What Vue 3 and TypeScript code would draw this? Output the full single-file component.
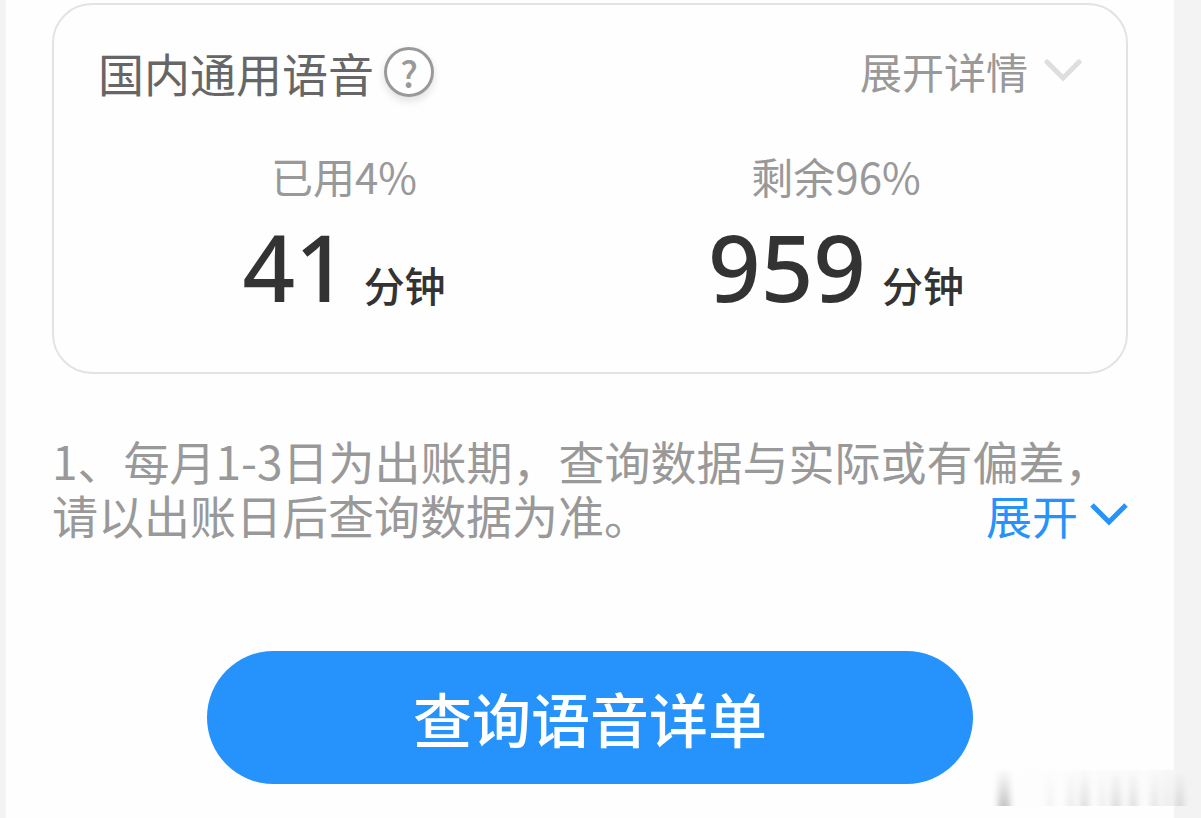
<script setup lang="ts">
interface Usage {
  label: string
  value: number
}

interface Smudge {
  x: number
  width: number
  strength: number
}

const usages: Usage[] = [
  { label: '已用4%', value: 41 },
  { label: '剩余96%', value: 959 },
]

const smudges: Smudge[] = [
  { x: 8, width: 12, strength: 0.5 },
  { x: 57, width: 6, strength: 0.1 },
  { x: 77, width: 8, strength: 0.14 },
  { x: 90, width: 9, strength: 0.26 },
  { x: 109, width: 6, strength: 0.14 },
  { x: 121, width: 10, strength: 0.26 },
  { x: 139, width: 8, strength: 0.26 },
  { x: 161, width: 7, strength: 0.2 },
  { x: 174, width: 5, strength: 0.14 },
  { x: 185, width: 9, strength: 0.28 },
]
</script>

<template>
  <div class="page">
    <main class="sheet">
      <section class="card">
        <header class="card-head">
          <h1 class="title">国内通用语音</h1>
          <button class="help" type="button" aria-label="说明">?</button>
          <button class="details" type="button">
            <span>展开详情</span>
            <svg class="chevron" viewBox="0 0 38 24" fill="none" aria-hidden="true">
              <path d="M3 3 19 19 35 3" stroke="#dedede" stroke-width="5" stroke-linecap="round" />
            </svg>
          </button>
        </header>
        <div class="usages">
          <div v-for="usage in usages" :key="usage.label" class="usage">
            <p class="label">{{ usage.label }}</p>
            <p class="amount">
              <span class="number">{{ usage.value }}</span>
              <span class="unit">分钟</span>
            </p>
          </div>
        </div>
      </section>

      <div class="note">
        <p class="note-text">1、每月1-3日为出账期，查询数据与实际或有偏差，请以出账日后查询数据为准。</p>
        <button class="expand" type="button">
          <span>展开</span>
          <svg class="chevron" viewBox="0 0 38 24" fill="none" aria-hidden="true">
            <path d="M2 3 19 20 36 3" stroke="#2692fb" stroke-width="5" />
          </svg>
        </button>
      </div>

      <button class="query" type="button">查询语音详单</button>
    </main>

    <svg class="smudge" viewBox="0 0 200 50" aria-hidden="true">
      <defs>
        <linearGradient id="fade" x1="0" y1="0" x2="0" y2="1">
          <stop offset="0" stop-color="#999" stop-opacity="0" />
          <stop offset="1" stop-color="#8a8a8a" />
        </linearGradient>
        <linearGradient id="veil" x1="0" y1="0" x2="1" y2="0">
          <stop offset="0" stop-color="#fefefe" />
          <stop offset="0.8" stop-color="#fbfbfb" />
          <stop offset="1" stop-color="#f3f3f3" />
        </linearGradient>
        <filter id="soft" x="-1" y="-0.1" width="3" height="1.2">
          <feGaussianBlur stdDeviation="3 0" />
        </filter>
      </defs>
      <rect x="0" y="6" width="200" height="36" fill="url(#veil)" />
      <rect
        v-for="bar in smudges"
        :key="bar.x"
        :x="bar.x"
        y="4"
        :width="bar.width"
        height="38"
        :opacity="bar.strength"
        fill="url(#fade)"
        filter="url(#soft)"
      />
    </svg>
  </div>
</template>

<style>
body {
  margin: 0;
  background: #f3f3f3;
}
</style>

<style scoped>
.page {
  position: relative;
  box-sizing: border-box;
  min-height: 100vh;
  padding: 0 27px 0 6px;
  background: #f3f3f3;
  font-family: "Noto Sans CJK SC", sans-serif;
  display: flex;
}

.sheet {
  flex: 1;
  box-sizing: border-box;
  padding: 3px 46px 34px;
  background: #fefefe;
}

button {
  border: 0;
  padding: 0;
  background: none;
  font: inherit;
  cursor: pointer;
}

h1,
p {
  margin: 0;
}

.card {
  padding: 37px 44px 55px;
  border: 2px solid #e3e3e3;
  border-radius: 40px;
}

.card-head {
  display: flex;
  align-items: center;
  height: 60px;
}

.title {
  font-size: 46px;
  font-weight: 400;
  line-height: 60px;
  color: #666;
}

.help {
  box-sizing: border-box;
  width: 50px;
  height: 50px;
  margin-left: 10px;
  border: 3px solid #999;
  border-radius: 50%;
  font-size: 36px;
  font-weight: 500;
  line-height: 42px;
  color: #999;
  box-shadow: 0 4px 8px rgba(0, 0, 0, 0.12);
}

.details {
  display: flex;
  align-items: center;
  gap: 16px;
  margin-left: auto;
  padding-bottom: 2px;
  font-size: 42px;
  line-height: 56px;
  color: #999;
}

.chevron {
  width: 38px;
  height: 24px;
}

.usages {
  display: grid;
  grid-template-columns: 1fr 1fr;
  margin-top: 46px;
  text-align: center;
}

.label {
  font-size: 42px;
  line-height: 56px;
  color: #999;
}

.amount {
  display: flex;
  justify-content: center;
  align-items: baseline;
  gap: 16px;
  height: 100px;
  margin-top: 13px;
  color: #333;
}

.number {
  font-family: "Noto Sans", sans-serif;
  font-size: 92px;
  font-weight: 500;
  line-height: 100px;
}

.unit {
  font-size: 41px;
  font-weight: 500;
  line-height: 56px;
}

.note {
  display: grid;
  margin-top: 59px;
  font-size: 46px;
  line-height: 54px;
  color: #999;
}

.note-text,
.expand {
  grid-area: 1 / 1;
}

.expand {
  display: flex;
  align-items: center;
  gap: 12px;
  align-self: end;
  justify-self: end;
  color: #2692fb;
}

.query {
  display: block;
  width: calc(100% - 310px);
  height: 133px;
  margin: 110px auto 0;
  border-radius: 67px;
  background: #2692fb;
  color: #fff;
  font-size: 59px;
  font-weight: 500;
  line-height: 80px;
}

.smudge {
  position: absolute;
  right: 11px;
  bottom: 4px;
  width: 200px;
  height: 50px;
  pointer-events: none;
}
</style>
